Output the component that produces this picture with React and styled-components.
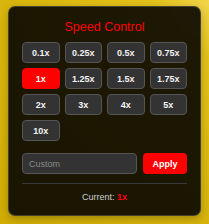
import React, { useState } from 'react';
import styled, { createGlobalStyle } from 'styled-components';

const GlobalStyle = createGlobalStyle`
  html, body {
    margin: 0;
    padding: 0;
  }
  body {
    width: 209px;
    height: 224px;
    overflow: hidden;
    font-family: "Liberation Sans", Arial, sans-serif;
    background: radial-gradient(circle at 100% 0%, #f2d54a 0%, #e3c21a 18%, #dbb90f 55%, #d2ad06 100%);
  }
`;

const Page = styled.div`
  padding: 6px 8px 9px;
`;

const Panel = styled.div`
  width: 193px;
  box-sizing: border-box;
  background: rgba(0, 0, 0, 0.88);
  border: 1px solid rgba(255, 255, 255, 0.18);
  border-radius: 7px;
  padding: 13px 13px 12px;
  box-shadow: 0 3px 8px rgba(0, 0, 0, 0.25);
`;

const Title = styled.h3`
  margin: 0 0 7px;
  color: #ff0000;
  font-size: 12.5px;
  font-weight: 400;
  line-height: 15px;
  text-align: center;
`;

const Grid = styled.div`
  display: grid;
  grid-template-columns: repeat(4, 1fr);
  gap: 5px;
`;

const SpeedButton = styled.button`
  height: 21px;
  padding: 0;
  border-radius: 4px;
  border: 1px solid ${p => (p.$active ? '#ff0000' : '#555')};
  background: ${p => (p.$active ? '#ff0000' : '#333')};
  color: #f2f2f2;
  font-family: inherit;
  font-size: 9px;
  font-weight: 700;
  cursor: pointer;
`;

const CustomRow = styled.div`
  display: flex;
  gap: 6px;
  margin-top: 12px;
`;

const Input = styled.input`
  flex: 1;
  min-width: 0;
  height: 21px;
  box-sizing: border-box;
  padding: 0 6px;
  border-radius: 4px;
  border: 1px solid #555;
  background: #333;
  color: #eee;
  font-family: inherit;
  font-size: 9px;
  outline: none;

  &::placeholder {
    color: #8a8a8a;
  }
`;

const ApplyButton = styled.button`
  width: 44px;
  height: 21px;
  padding: 0;
  border: none;
  border-radius: 4px;
  background: #ff0000;
  color: #fff;
  font-family: inherit;
  font-size: 9px;
  font-weight: 700;
  cursor: pointer;
`;

const Footer = styled.div`
  margin-top: 9px;
  padding-top: 8px;
  border-top: 1px solid #3a3a3a;
  text-align: center;
  color: #cfcfcf;
  font-size: 9px;
  line-height: 11px;
`;

const Value = styled.span`
  color: #ff0000;
  font-weight: 700;
`;

const speeds = [0.1, 0.25, 0.5, 0.75, 1, 1.25, 1.5, 1.75, 2, 3, 4, 5, 10];

const App = () => {
  const [speed, setSpeed] = useState(1);
  const [custom, setCustom] = useState('');

  return (
    <Page>
      <GlobalStyle />
      <Panel>
        <Title>Speed Control</Title>
        <Grid>
          {speeds.map(s => (
            <SpeedButton key={s} $active={s === speed} onClick={() => setSpeed(s)}>
              {s}x
            </SpeedButton>
          ))}
        </Grid>
        <CustomRow>
          <Input
            placeholder="Custom"
            value={custom}
            onChange={e => setCustom(e.target.value)}
          />
          <ApplyButton onClick={() => custom && setSpeed(parseFloat(custom))}>Apply</ApplyButton>
        </CustomRow>
        <Footer>
          Current: <Value>{speed}x</Value>
        </Footer>
      </Panel>
    </Page>
  );
};

export default App;
